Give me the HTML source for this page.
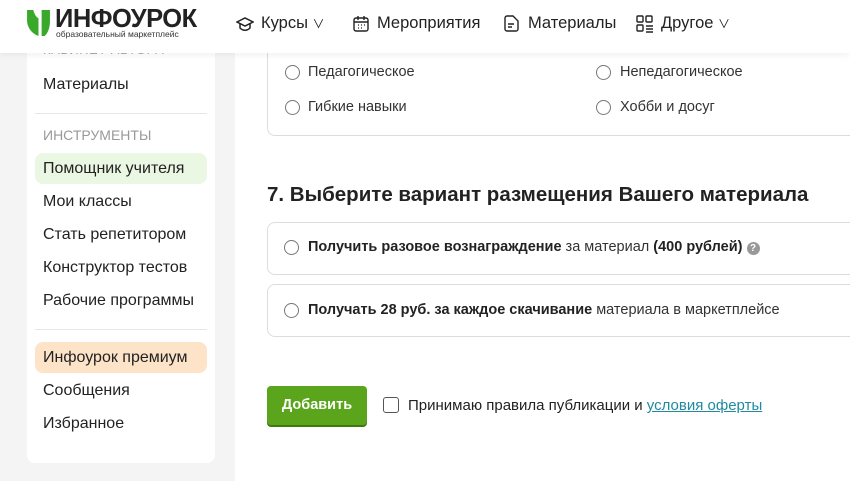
<!DOCTYPE html>
<html><head><meta charset="utf-8"><style>
*{margin:0;padding:0;box-sizing:border-box}
body{width:850px;height:481px;overflow:hidden;background:#f4f4f4;font-family:"Liberation Sans","Noto Sans CJK SC",sans-serif;position:relative;color:#222}
.hdr{position:absolute;left:0;top:0;width:850px;height:53px;background:#fff;box-shadow:0 2px 6px rgba(0,0,0,.06);z-index:5}
.main{position:absolute;left:235px;top:0;width:615px;height:481px;background:#fff}
.side{position:absolute;left:27px;top:40px;width:188px;height:423px;background:#fff;border-radius:8px}
.si{position:absolute;left:8px;width:172px;height:31px;border-radius:8px;font-size:16px;padding-left:8px;line-height:31px;color:#222}
.hr{position:absolute;left:8px;width:172px;height:1px;background:#e6e6e6}
.card{position:absolute;left:267px;width:600px;border:1px solid #ddd;border-radius:8px;background:#fff}
.rad{position:absolute;width:15px;height:15px;border:1.3px solid #777;border-radius:50%;background:#fff}
.t{position:absolute;font-size:14.5px;color:#333;white-space:nowrap}
.nav{position:absolute;top:14px;font-size:16.5px;color:#222;white-space:nowrap}
</style></head><body>
<div class="main"></div>
<div class="side">
<div style="position:absolute;left:16px;top:2px;font-size:13px;color:#aaa;letter-spacing:.5px">КАБИНЕТ АВТОРА</div>
<div class="si" style="top:29px">Материалы</div>
<div class="hr" style="top:73px"></div>
<div style="position:absolute;left:16px;top:87px;font-size:14px;color:#999">ИНСТРУМЕНТЫ</div>
<div class="si" style="top:113px;background:#eaf7e3">Помощник учителя</div>
<div class="si" style="top:146px">Мои классы</div>
<div class="si" style="top:179px">Стать репетитором</div>
<div class="si" style="top:212px">Конструктор тестов</div>
<div class="si" style="top:245px">Рабочие программы</div>
<div class="hr" style="top:289px"></div>
<div class="si" style="top:302px;background:#fde3c8">Инфоурок премиум</div>
<div class="si" style="top:335px">Сообщения</div>
<div class="si" style="top:368px">Избранное</div>
</div>
<div class="hdr">
<svg style="position:absolute;left:27px;top:10px" width="23" height="26" viewBox="0 0 22 25"><path d="M0 0h6c1 4 3 7 5 8v17c-6-2-11-8-11-15z" fill="#3aa82a"/><path d="M22 0h-8v25h3c3-3 5-8 5-14z" fill="#3aa82a"/></svg>
<div style="position:absolute;left:55px;top:5px;font-size:25.5px;font-weight:bold;color:#222;letter-spacing:-.5px">ИНФОУРОК</div>
<div style="position:absolute;left:56px;top:29px;font-size:8.5px;color:#333">образовательный маркетплейс</div>
<svg style="position:absolute;left:236px;top:16px" width="18" height="16" viewBox="0 0 18 16" fill="none" stroke="#222" stroke-width="1.5"><path d="M1 6l8-4 8 4-8 4z"/><path d="M4 8v4c3 3 7 3 10 0V8"/></svg>
<div class="nav" style="left:261px">Курсы <span style="font-size:12px">∨</span></div>
<svg style="position:absolute;left:353px;top:15px" width="16" height="17" viewBox="0 0 16 17" fill="none" stroke="#222" stroke-width="1.4"><rect x="1" y="3" width="14" height="13" rx="2"/><path d="M1 7h14M5 1v4M11 1v4"/><path d="M5 10h1M8 10h1M11 10h1M5 13h1M8 13h1" stroke-width="1.2"/></svg>
<div class="nav" style="left:377px">Мероприятия</div>
<svg style="position:absolute;left:504px;top:15px" width="15" height="17" viewBox="0 0 15 17" fill="none" stroke="#222" stroke-width="1.4"><path d="M3 1h6l5 5v8a2 2 0 0 1-2 2H3a2 2 0 0 1-2-2V3a2 2 0 0 1 2-2z"/><path d="M4 9h6M4 12h4"/></svg>
<div class="nav" style="left:528px">Материалы</div>
<svg style="position:absolute;left:636px;top:15px" width="18" height="18" viewBox="0 0 18 18" fill="none" stroke="#222" stroke-width="1.4"><rect x="1" y="1" width="6" height="6" rx="1"/><rect x="10" y="1" width="6" height="6" rx="1"/><rect x="1" y="10" width="6" height="6" rx="1"/><path d="M10 11h7M10 14h7M10 17h7"/></svg>
<div class="nav" style="left:661px">Другое <span style="font-size:12px">∨</span></div>
</div>
<div class="card" style="top:30px;height:106px;border-top:none"></div>
<div class="rad" style="left:285px;top:65px"></div><div class="t" style="left:308px;top:64px">Педагогическое</div>
<div class="rad" style="left:596px;top:65px"></div><div class="t" style="left:620px;top:64px">Непедагогическое</div>
<div class="rad" style="left:285px;top:100px"></div><div class="t" style="left:308px;top:99px">Гибкие навыки</div>
<div class="rad" style="left:596px;top:100px"></div><div class="t" style="left:620px;top:99px">Хобби и досуг</div>
<div style="position:absolute;left:267px;top:183px;font-size:20.5px;font-weight:bold;color:#222">7. Выберите вариант размещения Вашего материала</div>
<div class="card" style="top:222px;height:53px"></div>
<div class="rad" style="left:284px;top:240px"></div>
<div class="t" style="left:308px;top:239px"><b style="color:#222">Получить разовое вознаграждение</b> за материал <b style="color:#222">(400 рублей)</b> <span style="display:inline-block;width:13px;height:13px;border-radius:50%;background:#999;color:#fff;font-size:10px;text-align:center;line-height:13px;font-weight:bold">?</span></div>
<div class="card" style="top:284px;height:53px"></div>
<div class="rad" style="left:284px;top:303px"></div>
<div class="t" style="left:308px;top:302px"><b style="color:#222">Получать 28 руб. за каждое скачивание</b> материала в маркетплейсе</div>
<div style="position:absolute;left:267px;top:386px;width:100px;height:39px;background:#5aa51c;border-radius:4px;box-shadow:0 2px 0 #3e7a10;color:#fff;font-weight:bold;font-size:14.5px;text-align:center;line-height:39px">Добавить</div>
<div style="position:absolute;left:383px;top:397px;width:16px;height:16px;border:1.3px solid #555;border-radius:3px"></div>
<div class="t" style="left:408px;top:397px;color:#222;font-size:15px">Принимаю правила публикации и <span style="color:#1f8aa0;text-decoration:underline">условия оферты</span></div>
</body></html>
